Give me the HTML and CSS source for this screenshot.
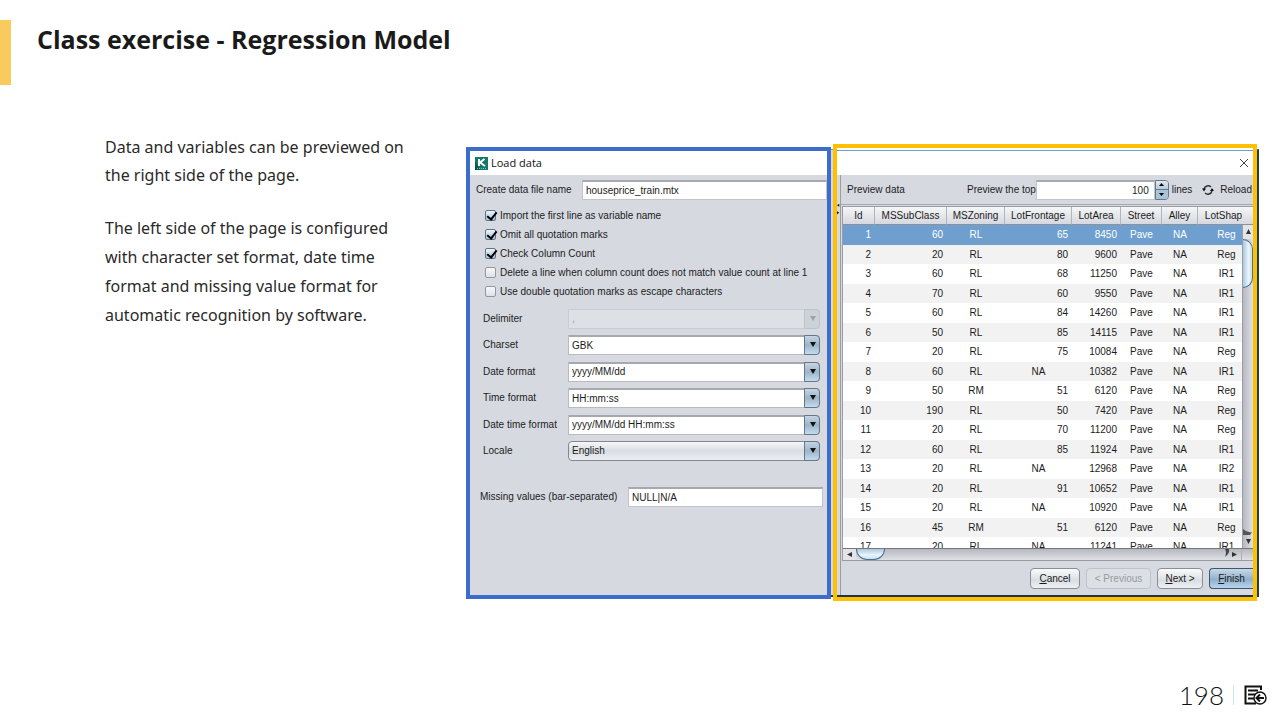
FILE: index.html
```html
<!DOCTYPE html>
<html lang="en">
<head>
<meta charset="utf-8">
<title>Class exercise - Regression Model</title>
<link rel="stylesheet" href="styles.css">
</head>
<body>
<header class="slide-header">
  <span class="accent"></span>
  <h1>Class exercise - Regression Model</h1>
</header>
<main class="slide-body">
  <section class="notes">
    <p>Data and variables can be previewed on the right side of the page.</p>
    <p class="loose">The left side of the page is configured with character set format, date time format and missing value format for automatic recognition by software.</p>
  </section>
  <section class="dialog" aria-label="Load data">
    <form class="panel settings">
      <div class="titlebar">
        <svg class="logo" viewBox="0 0 13 13" aria-hidden="true"><rect width="13" height="13" fill="#14786d"/><path d="M0 13V5L5 13Z" fill="#0b5550"/><path d="M4 2V9M9.500 2L5 5.500L10 9" fill="none" stroke="#fff" stroke-width="2"/><path d="M2 11.500H11" stroke="#7fc5bb" stroke-width="1" stroke-dasharray="1 1"/></svg>
        <span>Load data</span>
      </div>
      <div class="file-row">
        <label for="file">Create data file name</label>
        <input class="field" id="file" type="text" value="houseprice_train.mtx">
      </div>
      <div class="checks">
        <label><input type="checkbox" checked>Import the first line as variable name</label>
        <label><input type="checkbox" checked>Omit all quotation marks</label>
        <label><input type="checkbox" checked>Check Column Count</label>
        <label><input type="checkbox">Delete a line when column count does not match value count at line 1</label>
        <label><input type="checkbox">Use double quotation marks as escape characters</label>
      </div>
      <div class="combos">
        <div class="combo-row"><label for="delim">Delimiter</label><span class="combo off"><select id="delim" disabled><option>,</option></select></span></div>
        <div class="combo-row"><label for="charset">Charset</label><span class="combo"><select id="charset"><option>GBK</option></select></span></div>
        <div class="combo-row"><label for="date">Date format</label><span class="combo"><select id="date"><option>yyyy/MM/dd</option></select></span></div>
        <div class="combo-row"><label for="time">Time format</label><span class="combo"><select id="time"><option>HH:mm:ss</option></select></span></div>
        <div class="combo-row"><label for="datetime">Date time format</label><span class="combo"><select id="datetime"><option>yyyy/MM/dd HH:mm:ss</option></select></span></div>
        <div class="combo-row"><label for="locale">Locale</label><span class="combo fixed"><select id="locale"><option>English</option></select></span></div>
      </div>
      <div class="missing-row">
        <label for="missing">Missing values (bar-separated)</label>
        <input class="field" id="missing" type="text" value="NULL|N/A">
      </div>
    </form>
    <section class="panel preview">
      <div class="titlebar">
        <button class="close" type="button" aria-label="Close"><svg viewBox="0 0 10 10"><path d="M1 1L9 9M9 1L1 9" stroke="#444" fill="none"/></svg></button>
      </div>
      <div class="preview-main">
        <div class="splitter"><svg viewBox="0 0 4 14" aria-hidden="true"><path d="M3 0V4L0 2ZM0 10L3 12L0 14Z" fill="#111"/></svg></div>
        <div class="preview-content">
          <div class="toolbar">
            <span class="caption">Preview data</span>
            <label for="top">Preview the top</label>
            <input class="field count" id="top" type="text" value="100">
            <span class="spin"><button type="button" aria-label="More"><svg viewBox="0 0 5 3"><path d="M0 3L2.500 0L5 3Z"/></svg></button><button type="button" aria-label="Fewer"><svg viewBox="0 0 5 3"><path d="M0 0L2.500 3L5 0Z"/></svg></button></span>
            <span class="lines">lines</span>
            <button class="reload" type="button"><svg viewBox="0 0 12 12" aria-hidden="true"><path d="M2 5A4.200 4.200 0 0 1 9 3M10 7A4.200 4.200 0 0 1 3 9" fill="none" stroke="#333" stroke-width="1.400"/><path d="M0 4.500H4L2 7.500ZM8 7H12L10 4Z" fill="#111"/></svg>Reload</button>
          </div>
          <div class="grid-box">
            <div class="viewport">
              <table>
                <colgroup><col class="c-id"><col class="c-sub"><col class="c-zone"><col class="c-front"><col class="c-area"><col class="c-street"><col class="c-alley"><col></colgroup>
                <thead><tr><th>Id</th><th>MSSubClass</th><th>MSZoning</th><th>LotFrontage</th><th>LotArea</th><th>Street</th><th>Alley</th><th>LotShap</th></tr></thead>
                <tbody>
                <tr class="selected"><td>1</td><td>60</td><td>RL</td><td>65</td><td>8450</td><td>Pave</td><td>NA</td><td>Reg</td></tr>
                <tr><td>2</td><td>20</td><td>RL</td><td>80</td><td>9600</td><td>Pave</td><td>NA</td><td>Reg</td></tr>
                <tr><td>3</td><td>60</td><td>RL</td><td>68</td><td>11250</td><td>Pave</td><td>NA</td><td>IR1</td></tr>
                <tr><td>4</td><td>70</td><td>RL</td><td>60</td><td>9550</td><td>Pave</td><td>NA</td><td>IR1</td></tr>
                <tr><td>5</td><td>60</td><td>RL</td><td>84</td><td>14260</td><td>Pave</td><td>NA</td><td>IR1</td></tr>
                <tr><td>6</td><td>50</td><td>RL</td><td>85</td><td>14115</td><td>Pave</td><td>NA</td><td>IR1</td></tr>
                <tr><td>7</td><td>20</td><td>RL</td><td>75</td><td>10084</td><td>Pave</td><td>NA</td><td>Reg</td></tr>
                <tr><td>8</td><td>60</td><td>RL</td><td class="na">NA</td><td>10382</td><td>Pave</td><td>NA</td><td>IR1</td></tr>
                <tr><td>9</td><td>50</td><td>RM</td><td>51</td><td>6120</td><td>Pave</td><td>NA</td><td>Reg</td></tr>
                <tr><td>10</td><td>190</td><td>RL</td><td>50</td><td>7420</td><td>Pave</td><td>NA</td><td>Reg</td></tr>
                <tr><td>11</td><td>20</td><td>RL</td><td>70</td><td>11200</td><td>Pave</td><td>NA</td><td>Reg</td></tr>
                <tr><td>12</td><td>60</td><td>RL</td><td>85</td><td>11924</td><td>Pave</td><td>NA</td><td>IR1</td></tr>
                <tr><td>13</td><td>20</td><td>RL</td><td class="na">NA</td><td>12968</td><td>Pave</td><td>NA</td><td>IR2</td></tr>
                <tr><td>14</td><td>20</td><td>RL</td><td>91</td><td>10652</td><td>Pave</td><td>NA</td><td>IR1</td></tr>
                <tr><td>15</td><td>20</td><td>RL</td><td class="na">NA</td><td>10920</td><td>Pave</td><td>NA</td><td>IR1</td></tr>
                <tr><td>16</td><td>45</td><td>RM</td><td>51</td><td>6120</td><td>Pave</td><td>NA</td><td>Reg</td></tr>
                <tr><td>17</td><td>20</td><td>RL</td><td class="na">NA</td><td>11241</td><td>Pave</td><td>NA</td><td>IR1</td></tr>
                </tbody>
              </table>
              <div class="vbar" aria-hidden="true"><svg class="tip" viewBox="0 0 11 14"><path d="M3 9L5.500 4L8 9Z" fill="#333"/></svg><span class="vthumb"></span><svg class="tip end" viewBox="0 0 11 20"><path d="M0 1Q4 5 9 4L7 7H0Z" fill="#555"/><path d="M3 11L5.500 16L8 11Z" fill="#333"/></svg></div>
            </div>
            <div class="hbar" aria-hidden="true"><svg class="tip" viewBox="0 0 13 11"><path d="M9 3V8L4 5.500Z" fill="#333"/></svg><span class="hthumb"></span><svg class="tip end" viewBox="0 0 28 11"><path d="M0 0H4Q5 4 0 8Q2 3 0 0Z" fill="#444"/><path d="M7 3V8L12 5.500Z" fill="#333"/><path d="M16.500 0V11" stroke="#aeb1b8"/></svg></div>
          </div>
          <div class="actions">
            <button type="button"><u>C</u>ancel</button>
            <button type="button" disabled>&lt; Previous</button>
            <button type="button"><u>N</u>ext &gt;</button>
            <button type="button" class="finish"><u>F</u>inish</button>
          </div>
        </div>
      </div>
    </section>
  </section>
</main>
<footer class="slide-footer">
  <span class="page-no">198</span>
  <a href="#contents" aria-label="Contents"><svg viewBox="0 0 23 20"><path d="M17 5V1.500H1.500V18.500H12M4 5.500H14M4 9.500H11M4 13.500H10" fill="none" stroke="#111" stroke-width="2"/><circle cx="16" cy="13" r="6" fill="#fff" stroke="#111" stroke-width="1.400"/><path d="M20 13H13M16 9.500L12.500 13L16 16.500" fill="none" stroke="#111" stroke-width="2"/></svg></a>
</footer>
</body>
</html>
```
FILE: styles.css
```css
* { box-sizing: border-box; }
body {
  margin: 0;
  min-height: 100vh;
  display: flex;
  flex-direction: column;
  background: #fff;
  color: #222;
  font-family: "Noto Sans", "Open Sans", sans-serif;
}
button, input, select { font: inherit; color: inherit; margin: 0; }
svg { display: block; }

.slide-header { display: flex; gap: 26px; padding-top: 20px; }
.accent { width: 11px; height: 65px; background: #f9ca5c; }
h1 { margin: 0; font: bold 25px/38px "Open Sans", "Noto Sans", sans-serif; color: #1a1a1a; }

.slide-body {
  display: flex;
  align-items: flex-start;
  justify-content: space-between;
  gap: 40px;
  padding: 59px 23px 0 105px;
}
.notes { flex: 0 1 312px; font: 16px/28px "Noto Sans", "Open Sans", sans-serif; color: #2a2a2a; }
.notes p { margin: -11px 0 25px; }
.notes .loose { margin: 0; line-height: 29px; }

/* Dialog */
.dialog {
  position: relative;
  flex: 0 1 791px;
  min-width: 0;
  display: flex;
  gap: 2px;
  font: 10px/12px "Liberation Sans", Arial, sans-serif;
  color: #1c1c1c;
}
.dialog::before {
  content: "";
  position: absolute;
  inset: 5px -2px 4px 20px;
  background: #d6d9e0;
  border-top: 1px solid #6d9fce;
  border-right: 2px solid #1d3d56;
  border-bottom: 2px solid #1d3347;
}
.panel { position: relative; min-width: 0; background: #d6d9e0; overflow: hidden; }
.settings { flex: 357 1 0; margin: 3px 0 2px; border: 4px solid #3c6dcc; }
.preview {
  flex: 416 1 0;
  display: flex;
  flex-direction: column;
  border: 4px solid #ffc000;
}
.titlebar { display: flex; align-items: center; gap: 3px; height: 24px; padding-left: 5px; background: #fff; font: 11px/14px "Open Sans", sans-serif; color: #111; }
.logo { width: 13px; height: 13px; }
.preview .titlebar { height: 27px; justify-content: flex-end; padding: 3px 4px 0 0; background: linear-gradient(#fff 2px, #6d9fce 2px, #6d9fce 3px, #fff 3px); }
.close { width: 10px; height: 10px; padding: 0; border: 0; background: none; }

.field { min-width: 0; height: 20px; padding: 0 3px; border: 1px solid #c3c5ca; border-top: 2px solid #a6a8ad; border-radius: 0; background: #fff; }
.file-row { display: flex; align-items: center; padding: 5px 0 0 6px; }
.file-row label { flex: 0 0 106px; }
.file-row .field { flex: 1; }
.checks { display: grid; grid-auto-rows: 19px; padding: 6px 0 0 15px; }
.checks label { display: flex; align-items: center; gap: 4px; white-space: nowrap; }
.checks input {
  appearance: none;
  flex: none;
  width: 11px;
  height: 11px;
  border: 1px solid #93969c;
  border-radius: 2px;
  background: linear-gradient(#f8f8fa, #dfe1e6);
  position: relative;
}
.checks input:checked { border-color: #60738a; background: linear-gradient(#eef4f9, #a9c3da); }
.checks input:checked::after {
  content: "";
  position: absolute;
  left: 3px;
  top: -1px;
  width: 4px;
  height: 8px;
  border: solid #000;
  border-width: 0 2px 2px 0;
  transform: rotate(38deg);
}
.combos { padding: 4px 7px 0 13px; }
.combo-row { display: flex; align-items: center; height: 27px; }
.combo-row:nth-child(even) { height: 26px; }
.combo-row label { flex: 0 0 85px; }
.combo { position: relative; flex: 1; display: flex; height: 20px; }
.combo select {
  appearance: none;
  flex: 1;
  min-width: 0;
  padding: 0 20px 0 3px;
  border: 1px solid #b8bbc1;
  border-top: 2px solid #a6a8ad;
  border-radius: 0 4px 4px 0;
  background: #fff;
}
.combo::before {
  content: "";
  position: absolute;
  z-index: 1;
  inset: 0 0 0 auto;
  width: 14px;
  border: 1px solid #63788c;
  border-radius: 0 4px 4px 0;
  background: linear-gradient(#c5d5e3, #9db5c9 50%, #c3dbec);
  pointer-events: none;
}
.combo::after {
  content: "";
  position: absolute;
  z-index: 2;
  right: 4px;
  top: 7px;
  border: solid transparent;
  border-width: 5px 3px 0;
  border-top-color: #111;
  pointer-events: none;
}
.combo.fixed select { border: 1px solid #84878d; border-radius: 4px; background: linear-gradient(#f6f7f9, #d9dce2 50%, #eceef2); }
.combo.off select { border: 1px solid #c9ccd3; background: #dde0e5; color: #9a9da4; opacity: 1; }
.combo.off::before { border-color: #bec2ca; background: #ccd2da; }
.combo.off::after { border-top-color: #9da1a8; }
.missing-row { display: flex; align-items: center; padding: 23px 4px 88px 10px; }
.missing-row label { flex: 0 0 148px; white-space: nowrap; }
.missing-row .field { flex: 1; }

/* Preview */
.preview-main { flex: 1; display: flex; border-bottom: 2px solid #1d3347; }
.splitter { flex: 0 0 4px; border-right: 1px solid #9a9da5; padding-top: 27px; }
.splitter svg { width: 3px; height: 14px; }
.preview-content { flex: 1; min-width: 0; }
.toolbar { display: flex; align-items: center; height: 30px; padding-left: 6px; border-bottom: 1px solid #a5a8af; white-space: nowrap; }
.caption { flex: 0 0 120px; }
.toolbar label { flex: 0 0 69px; }
.count { flex: 1; text-align: right; padding-right: 5px; }
.spin { flex: 0 0 14px; height: 20px; display: flex; flex-direction: column; border: 1px solid #63788c; border-radius: 0 4px 4px 0; overflow: hidden; }
.spin button { flex: 1; display: flex; align-items: center; justify-content: center; padding: 0; border: 0; background: linear-gradient(#e1e9f0, #b9cad8); }
.spin button + button { border-top: 1px solid #63788c; background: #a9c3d8; }
.spin svg { width: 5px; height: 3px; }
.lines { margin: 0 10px 0 3px; }
.reload { display: flex; align-items: center; gap: 6px; padding: 0 1px 0 0; border: 0; background: none; }
.reload svg { width: 12px; height: 12px; }
.grid-box { margin: 1px 0 0 1px; border: 1px solid #9a9da5; border-right: 0; background: #d6d9e0; }
.viewport { position: relative; height: 342px; overflow: hidden; background: #fff; border-bottom: 1px solid #777; }
table { width: 100%; table-layout: fixed; border-collapse: separate; border-spacing: 0; text-align: center; }
.c-id { width: 32px; } .c-sub { width: 72px; } .c-zone { width: 58px; } .c-front { width: 67px; }
.c-area { width: 49px; } .c-street { width: 41px; } .c-alley { width: 36px; }
th { height: 18px; padding: 0; font-weight: normal; border-right: 1px solid #b2b5bb; border-bottom: 1px solid #8d9198; background: linear-gradient(#f5f6f8, #d5d8de); }
th:last-child { padding-right: 4px; border-right: 0; }
td { height: 19px; padding: 0; }
tr:nth-child(odd) td { height: 20px; }
tr:nth-child(even) td { background: #f2f2f2; }
td:nth-child(1), td:nth-child(2), td:nth-child(4), td:nth-child(5) { text-align: right; padding-right: 4px; }
td.na:nth-child(4) { text-align: center; padding: 0; }
td:last-child { padding-left: 2px; }
tr.selected:nth-child(odd) td { background: #6f9fcf; color: #fff; }
.vbar { position: absolute; inset: 18px 0 0 auto; width: 11px; display: flex; flex-direction: column; border-left: 1px solid #9a9da5; background: linear-gradient(90deg, #b5b8bf, #dfe1e6); }
.vbar .tip { width: 11px; height: 14px; background: #e2e4e8; }
.vbar .tip.end { height: 20px; margin-top: auto; background: none; }
.vthumb { height: 49px; border: 1px solid #49708f; border-left: 0; border-radius: 0 11px 11px 0; background: linear-gradient(90deg, #a8c8e0, #eaf5fc 60%, #c8dfee); }
.hbar { display: flex; height: 11px; background: linear-gradient(#b5b8bf, #dfe1e6); }
.hbar .tip { width: 13px; height: 11px; background: #e2e4e8; }
.hbar .tip.end { width: 28px; margin-left: auto; background: none; }
.hthumb { width: 29px; border: 1px solid #49708f; border-top: 0; border-radius: 0 0 14px 14px; background: linear-gradient(#a8c8e0, #eaf5fc 60%, #c8dfee); }
.actions { display: flex; justify-content: flex-end; gap: 6px; padding-top: 7px; }
.actions button { width: 50px; height: 21px; padding: 0; border: 1px solid #8a8d94; border-radius: 4px; background: linear-gradient(#fafbfc, #dadde3 60%, #eef0f3); white-space: nowrap; }
.actions button:nth-child(2) { width: 65px; }
.actions button:nth-child(3) { width: 46px; }
.actions button:disabled { border-color: #bfc2c9; background: #dcdfe4; color: #969aa2; }
.actions .finish { width: 44px; border-color: #3b566e; border-right: 0; border-radius: 4px 0 0 4px; background: linear-gradient(#c9d9e7, #8fb0cc 55%, #b9d4e9); }

/* Footer */
.slide-footer { margin-top: auto; display: flex; align-items: center; justify-content: flex-end; padding: 0 13px 9px 0; }
.page-no { padding-right: 9px; font: 300 26px/32px Lato, sans-serif; color: #111; }
.slide-footer a { display: flex; align-items: center; height: 20px; padding-left: 10px; border-left: 1px solid #d3e0f5; }
.slide-footer svg { width: 23px; height: 20px; }
```
